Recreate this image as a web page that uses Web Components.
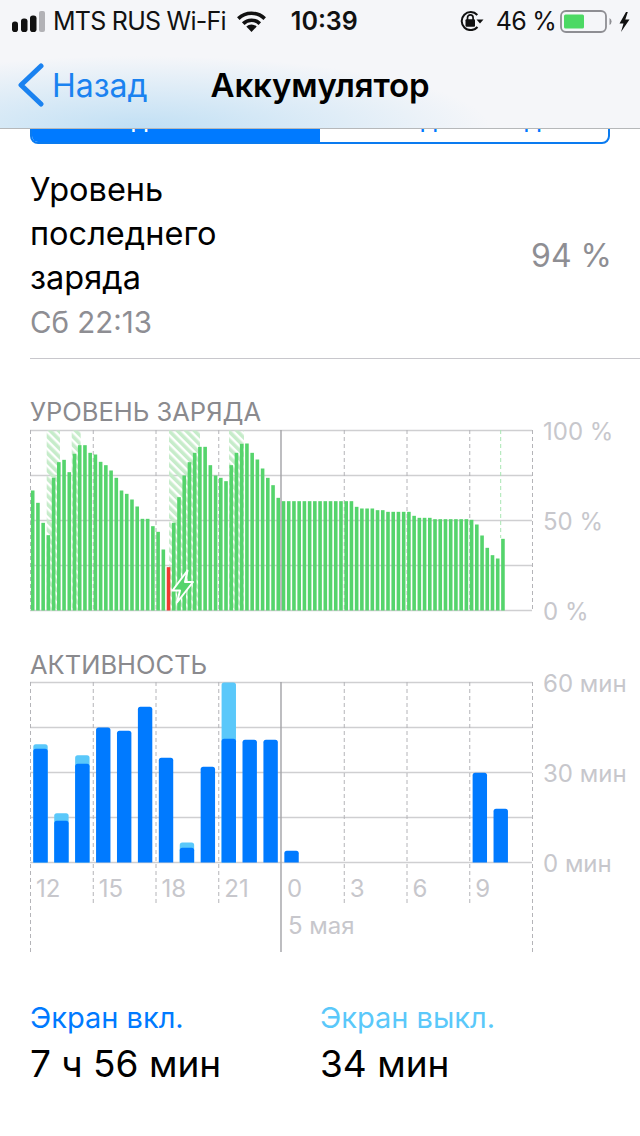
<!DOCTYPE html>
<html lang="ru">
<head>
<meta charset="utf-8">
<title>Аккумулятор</title>
<style>
  html, body { margin: 0; padding: 0; background: #fff; }
  body { width: 640px; height: 1136px; overflow: hidden; font-family: Inter, "Noto Sans", sans-serif; }
</style>
</head>
<body>
<battery-page></battery-page>

<script>
const FONT = 'Inter, "Noto Sans", sans-serif';

// shared grid of both charts: horizontal rules + hour marks
function gridLines(tickBottom, edgeBottom) {
  let out = '';
  for (let i = 0; i <= 4; i++) {
    const y = i * 45 + 0.5;
    out += `<line x1="0" x2="502" y1="${y}" y2="${y}" stroke="#cfcfd1" stroke-width="1.4"/>`;
  }
  for (let i = 0; i <= 8; i++) {
    const x = i * 62.75 + 0.5;
    const bottom = i === 0 || i === 8 ? edgeBottom : tickBottom;
    if (i === 4) continue;
    out += `<line x1="${x}" x2="${x}" y1="0" y2="${bottom}" stroke="#b4b4b8" stroke-width="1" stroke-dasharray="4 3"/>`;
  }
  return out;
}

class StatusBar extends HTMLElement {
  constructor() {
    super();
    this.shadowDOM = this.attachShadow({ mode: 'open' });
  }

  connectedCallback() {
    this.shadowDOM.innerHTML = `
      <style>
        :host { display: flex; align-items: center; height: 42px; box-sizing: border-box; padding-left: 12px; font-size: 25px; color: #111; }
        svg { display: block; flex: none; }
        .carrier { margin-left: 8px; white-space: nowrap; letter-spacing: -.75px; }
        .wifi { margin-left: 11px; }
        .time { margin-left: 25px; font-weight: 600; white-space: nowrap; }
        .lock { margin-left: 102px; }
        .level { margin-left: 10px; white-space: nowrap; letter-spacing: -.7px; }
        .battery { margin-left: 4px; }
      </style>
      <svg width="33" height="21" viewBox="0 0 33 21">
        <rect x="0" y="10.500" width="6" height="10.500" rx="2.800" fill="#111"/>
        <rect x="9" y="7.500" width="6.500" height="13.500" rx="2.800" fill="#111"/>
        <rect x="18" y="4.500" width="6.500" height="16.500" rx="2.800" fill="#111"/>
        <rect x="27" y="0" width="6" height="21" rx="2" fill="#b2b2b6"/>
      </svg>
      <span class="carrier">MTS RUS Wi-Fi</span>
      <svg class="wifi" width="29" height="21" viewBox="0 0 29 21" fill="none" stroke="#111" stroke-width="3.6">
        <path d="M1.300 7.600a19 19 0 0 1 26.400 0"/>
        <path d="M6.200 12.600a11.800 11.800 0 0 1 16.600 0"/>
        <path d="M14.500 21 L9.300 15.600 a7.300 7.300 0 0 1 10.400 0 Z" fill="#111" stroke="none"/>
      </svg>
      <span class="time">10:39</span>
      <svg class="lock" width="26" height="20" viewBox="0 0 26 20" fill="none">
        <path d="M17.300 4A9 9 0 1 0 17.500 16" stroke="#111" stroke-width="2"/>
        <path d="M16.500 8.500h7l-3.500 4z" fill="#111"/>
        <rect x="5.500" y="8.200" width="9.500" height="7.500" rx="1" fill="#111"/>
        <path d="M7.500 9V6.700a2.800 2.800 0 0 1 5.600 0V9" stroke="#111" stroke-width="1.700"/>
      </svg>
      <span class="level">46 %</span>
      <svg class="battery" width="70" height="23" viewBox="0 0 70 23">
        <rect x="1" y="1" width="45" height="21" rx="5" fill="none" stroke="#8e8e93" stroke-width="1.800"/>
        <rect x="4" y="4.500" width="20" height="14" rx="1.500" fill="#4cd964"/>
        <path d="M49.500 8a4 4 0 0 1 0 7z" fill="#8e8e93"/>
        <path d="M66 2 L59.500 13.500 H63.500 L61 22 L69.500 9.500 H65.300 L67.800 2 Z" fill="#111"/>
      </svg>
    `;
  }
}

class NavBar extends HTMLElement {
  constructor() {
    super();
    this.shadowDOM = this.attachShadow({ mode: 'open' });
  }

  connectedCallback() {
    this.shadowDOM.innerHTML = `
      <style>
        :host {
          display: block;
          position: relative;
          z-index: 1;
          height: 129px;
          box-sizing: border-box;
          border-bottom: 1px solid #b6b8ba;
          background:
            radial-gradient(ellipse 350px 72px at 140px 128px, rgba(150, 205, 240, .55), rgba(150, 205, 240, 0)),
            #f5f6f9;
        }
        .bar { display: grid; grid-template-columns: 1fr auto 1fr; align-items: center; height: 86px; }
        .back { display: flex; align-items: center; padding-left: 17px; color: #1a82f0; font-size: 32px; }
        .back svg { display: block; margin-right: 7px; }
        .title { font-size: 33px; font-weight: 600; color: #000; letter-spacing: -.1px; white-space: nowrap; }
      </style>
      <slot></slot>
      <div class="bar">
        <div class="back">
          <svg width="28" height="44" viewBox="0 0 28 44" fill="none">
            <path d="M24 3 L4 22 L24 41" stroke="#1a82f0" stroke-width="5" stroke-linecap="round" stroke-linejoin="round"/>
          </svg>
          <span>Назад</span>
        </div>
        <div class="title">Аккумулятор</div>
        <div></div>
      </div>
    `;
  }
}

class SegmentControl extends HTMLElement {
  constructor() {
    super();
    this.shadowDOM = this.attachShadow({ mode: 'open' });
  }

  connectedCallback() {
    this.shadowDOM.innerHTML = `
      <style>
        :host {
          display: grid;
          grid-template-columns: 288px 1fr;
          height: 40px;
          margin: -25px 30px 0;
          box-sizing: border-box;
          border: 2px solid #0a7bf0;
          border-radius: 8px;
          overflow: hidden;
          font-size: 26px;
          text-align: center;
          line-height: 26px;
          white-space: nowrap;
        }
        .on { background: #007aff; color: #fff; }
        .off { color: #007aff; }
      </style>
      <div class="on">Последние 24 часа</div>
      <div class="off">Последние 10 дней</div>
    `;
  }
}

class ChargeRow extends HTMLElement {
  constructor() {
    super();
    this.shadowDOM = this.attachShadow({ mode: 'open' });
  }

  connectedCallback() {
    this.shadowDOM.innerHTML = `
      <style>
        :host {
          display: flex;
          align-items: center;
          justify-content: space-between;
          margin: 24px 0 0 30px;
          padding: 0 28px 14px 0;
          border-bottom: 1px solid #c8c7cc;
        }
        .name { font-size: 32.500px; line-height: 44px; color: #000; width: 220px; }
        .time { font-size: 29.500px; line-height: 44px; color: #8e8e93; }
        .value { margin-top: -2px; font-size: 32px; color: #8e8e93; }
      </style>
      <div>
        <div class="name"><slot name="name"></slot></div>
        <div class="time"><slot name="time"></slot></div>
      </div>
      <div class="value"><slot name="value"></slot></div>
    `;
  }
}

const CHART_CSS = `
  :host { display: block; font-size: 24px; color: #c7c7cc; }
  .head { margin-left: 30px; font-size: 25.500px; line-height: 30px; color: #8a8a8e; white-space: nowrap; }
  .chart { display: flex; margin-left: 30px; }
  svg { display: block; flex: none; overflow: visible; }
  .axis { display: flex; flex-direction: column; justify-content: space-between; height: 210px; margin: -13px 0 0 11px; line-height: 30px; white-space: nowrap; }
`;

class BatteryChart extends HTMLElement {
  constructor() {
    super();
    this.shadowDOM = this.attachShadow({ mode: 'open' });
  }

  connectedCallback() {
    // bar tops read from the reference, bottom of plot = 648
    const tops = [288, 325, 385, 422, 250, 203, 196, 233, 178, 152, 152, 175, 180, 202, 212, 228, 250, 288, 298, 315, 336, 373, 373, 395, 412, 465, 518, 385, 308, 243, 203, 175, 157, 157, 212, 243, 250, 260, 212, 175, 148, 147, 175, 195, 222, 250, 272, 310,
      320, 320, 320, 320, 320, 320, 320, 320, 320, 320, 320, 320, 320, 320, 337, 342, 342, 342, 347, 347, 352, 352, 352, 352, 352, 364, 370, 370, 370, 374, 374, 374, 374, 374, 374, 374, 376, 390, 423, 460, 482, 492, 433];
    const bars = tops.map((t, i) => {
      const h = (648 - t) / 3;
      return `<rect x="${(0.9 + i * 5.225).toFixed(2)}" y="${(180.5 - h).toFixed(2)}" width="3.600" height="${h.toFixed(2)}" fill="${i === 26 ? '#f03a30' : '#55d46c'}"/>`;
    }).join('');
    const bands = [[16.7, 13.3], [41.7, 9], [139, 31], [199, 15]]
      .map(([x, w]) => `<rect x="${x}" y="0.5" width="${w}" height="180" fill="url(#hatch)"/>`).join('');

    this.shadowDOM.innerHTML = `
      <style>${CHART_CSS}</style>
      <div class="head">УРОВЕНЬ ЗАРЯДА</div>
      <div class="chart" style="margin-top:3px">
        <svg width="502" height="181" viewBox="0 0 502 181">
          <defs>
            <pattern id="hatch" width="6" height="6" patternUnits="userSpaceOnUse" patternTransform="rotate(-45)">
              <rect width="3.6" height="6" fill="#c6ecca"/>
            </pattern>
          </defs>
          ${gridLines(180, 180)}
          ${bands}
          <line x1="470.700" x2="470.700" y1="0" y2="108" stroke="#a8e6b2" stroke-width="1" stroke-dasharray="4 3"/>
          ${bars}
          <line x1="251" x2="251" y1="0" y2="180" stroke="#a2a2a6" stroke-width="1.400"/>
          <path d="M157.500 140.500 L142.500 160.500 H150 L147 172.500 L163 152 H155 Z" fill="#55d46c" stroke="#fff" stroke-width="2" stroke-linejoin="round"/>
        </svg>
        <div class="axis"><span>100 %</span><span>50 %</span><span>0 %</span></div>
      </div>
    `;
  }
}

class ActivityChart extends HTMLElement {
  constructor() {
    super();
    this.shadowDOM = this.attachShadow({ mode: 'open' });
  }

  connectedCallback() {
    // [slot, screen on top, screen off top] in reference crop units, bottom = 638
    const data = [[0, 297, 283], [1, 513, 490], [2, 342, 316], [3, 233], [4, 243], [5, 171], [6, 324], [7, 594, 578], [8, 351], [9, 267, 98], [10, 270], [11, 270], [12, 603], [21, 369], [22, 477]];
    const bar = (x, top, color) => {
      const h = (638 - top) / 3;
      return `<path d="M${x} 180.500 V${(180.5 - h + 2.5).toFixed(2)} q0 -2.500 2.500 -2.500 h9.400 q2.500 0 2.500 2.500 V180.500 Z" fill="${color}"/>`;
    };
    const bars = data.map(([s, on, off]) => {
      const x = (3.3 + s * 20.92).toFixed(2);
      return (off ? bar(x, off, '#5ac8fa') : '') + bar(x, on, '#007aff');
    }).join('');

    this.shadowDOM.innerHTML = `
      <style>
        ${CHART_CSS}
        .plot { display: grid; flex: none; width: 502px; }
        .plot > * { grid-area: 1 / 1; }
        .hours { display: grid; grid-template-columns: repeat(8, 62.75px); align-self: start; margin-top: 192px; line-height: 30px; }
        .hours span { padding-left: 6px; }
        .date { align-self: start; margin: 229px 0 0 258px; line-height: 30px; }
      </style>
      <div class="head">АКТИВНОСТЬ</div>
      <div class="chart" style="margin-top:2px">
        <div class="plot">
          <svg width="502" height="270" viewBox="0 0 502 270">
            ${gridLines(224, 270)}
            ${bars}
            <line x1="251" x2="251" y1="0" y2="270" stroke="#a2a2a6" stroke-width="1.400"/>
          </svg>
          <div class="hours"><span>12</span><span>15</span><span>18</span><span>21</span><span>0</span><span>3</span><span>6</span><span>9</span></div>
          <div class="date">5 мая</div>
        </div>
        <div class="axis"><span>60 мин</span><span>30 мин</span><span>0 мин</span></div>
      </div>
    `;
  }
}

class UsageStat extends HTMLElement {
  constructor() {
    super();
    this.shadowDOM = this.attachShadow({ mode: 'open' });
  }

  connectedCallback() {
    this.shadowDOM.innerHTML = `
      <style>
        :host { display: block; }
        .label { font-size: 29px; line-height: 44px; color: var(--stat-color, #007aff); white-space: nowrap; }
        .value { font-size: 37px; line-height: 48px; color: #000; white-space: nowrap; }
      </style>
      <div class="label"><slot name="label"></slot></div>
      <div class="value"><slot name="value"></slot></div>
    `;
  }
}

class BatteryPage extends HTMLElement {
  constructor() {
    super();
    this.shadowDOM = this.attachShadow({ mode: 'open' });
  }

  connectedCallback() {
    this.shadowDOM.innerHTML = `
      <style>
        :host { display: block; font-family: ${FONT}; }
        battery-chart { margin-top: 38px; }
        activity-chart { margin-top: 23px; }
        .stats { display: grid; grid-template-columns: 290px 1fr; margin: 44px 0 0 30px; }
      </style>
      <nav-bar><status-bar></status-bar></nav-bar>
      <segment-control></segment-control>
      <charge-row>
        <span slot="name">Уровень последнего заряда</span>
        <span slot="time">Сб 22:13</span>
        <span slot="value">94 %</span>
      </charge-row>
      <battery-chart></battery-chart>
      <activity-chart></activity-chart>
      <div class="stats">
        <usage-stat>
          <span slot="label">Экран вкл.</span>
          <span slot="value">7 ч 56 мин</span>
        </usage-stat>
        <usage-stat style="--stat-color:#5ac8fa">
          <span slot="label">Экран выкл.</span>
          <span slot="value">34 мин</span>
        </usage-stat>
      </div>
    `;
  }
}

customElements.define('status-bar', StatusBar);
customElements.define('nav-bar', NavBar);
customElements.define('segment-control', SegmentControl);
customElements.define('charge-row', ChargeRow);
customElements.define('battery-chart', BatteryChart);
customElements.define('activity-chart', ActivityChart);
customElements.define('usage-stat', UsageStat);
customElements.define('battery-page', BatteryPage);
</script>
</body>
</html>
